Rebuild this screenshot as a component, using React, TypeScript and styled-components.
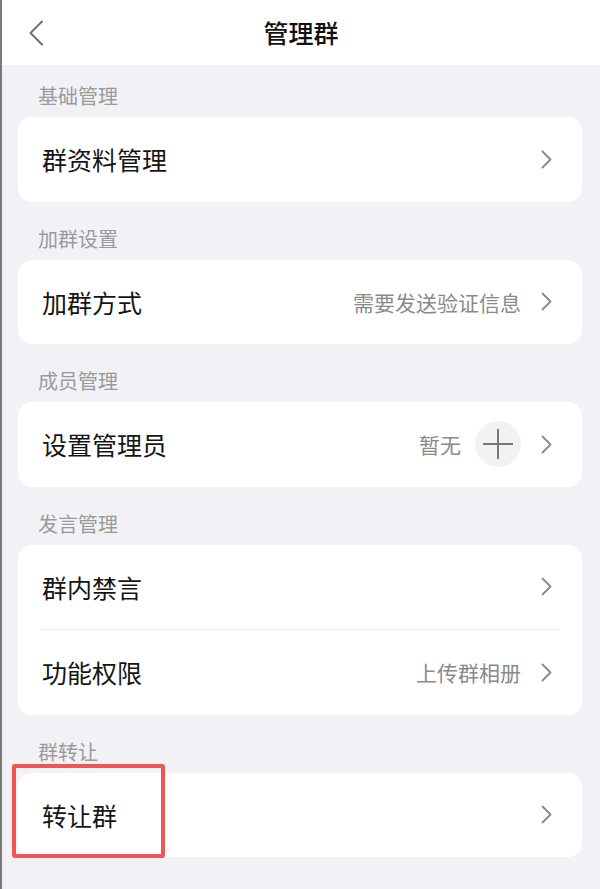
import React from "react";
import styled, { createGlobalStyle } from "styled-components";

const Global = createGlobalStyle`
  html, body { margin: 0; padding: 0; }
  body {
    font-family: "Noto Sans CJK SC", "Noto Sans", sans-serif;
    background: #f2f2f6;
  }
`;

const Page = styled.div`
  min-height: 889px;
  background: #f2f2f6;
  border-left: 2px solid #7a7a7a;
  box-sizing: border-box;
  display: flex;
  flex-direction: column;
`;

const Header = styled.header`
  height: 65px;
  background: #ffffff;
  display: grid;
  grid-template-columns: 58px 1fr 58px;
  align-items: center;
`;

const BackButton = styled.div`
  display: flex;
  align-items: center;
  padding-left: 26px;
  height: 100%;
`;

const Title = styled.h1`
  margin: 0;
  text-align: center;
  font-size: 25px;
  font-weight: 500;
  color: #111;
  line-height: 65px;
`;

const Content = styled.main`
  padding: 0 18px 0 16px;
  display: flex;
  flex-direction: column;
`;

const Label = styled.div<{ $first?: boolean }>`
  font-size: 20px;
  line-height: 28px;
  color: #9a9a9a;
  padding-left: 20px;
  margin: ${(p) => (p.$first ? "17px" : "23px")} 0 7px;
`;

const Card = styled.section`
  background: #ffffff;
  border-radius: 14px;
  display: flex;
  flex-direction: column;
`;

const Divider = styled.div`
  height: 1px;
  background: #ececec;
  margin: 0 24px;
`;

const Row = styled.div`
  position: relative;
  height: 84.5px;
  display: flex;
  align-items: center;
  padding: 0 30px 0 24px;
`;

const RowTitle = styled.span`
  flex: 1;
  font-size: 25px;
  color: #151515;
`;

const Value = styled.span`
  font-size: 21px;
  color: #8a8a8a;
  margin-right: 20px;
`;

const AddCircle = styled.div`
  width: 46px;
  height: 46px;
  border-radius: 50%;
  background: #f2f2f4;
  display: flex;
  align-items: center;
  justify-content: center;
  margin-left: -6px;
  margin-right: 20px;
`;

const Highlight = styled.div`
  position: absolute;
  left: -6px;
  top: -9px;
  width: 153px;
  height: 94px;
  border: 4px solid #f05656;
  border-radius: 3px;
  box-sizing: border-box;
  pointer-events: none;
`;

const Chevron = () => (
  <svg width="11" height="19" viewBox="0 0 11 19" fill="none">
    <path d="M1.5 1.5 L9.5 9.5 L1.5 17.5" stroke="#8a8a8a" strokeWidth="1.8" strokeLinecap="round" strokeLinejoin="round" />
  </svg>
);

const BackIcon = () => (
  <svg width="16" height="26" viewBox="0 0 16 26" fill="none">
    <path d="M14 1.5 L2.5 13 L14 24.5" stroke="#6e6e6e" strokeWidth="2" strokeLinecap="round" strokeLinejoin="round" />
  </svg>
);

const PlusIcon = () => (
  <svg width="30" height="30" viewBox="0 0 30 30" fill="none">
    <path d="M15 0 V30 M0 15 H30" stroke="#777" strokeWidth="2" />
  </svg>
);

export default function App() {
  return (
    <>
      <Global />
      <Page>
        <Header>
          <BackButton>
            <BackIcon />
          </BackButton>
          <Title>管理群</Title>
          <div />
        </Header>
        <Content>
          <Label $first>基础管理</Label>
          <Card>
            <Row>
              <RowTitle>群资料管理</RowTitle>
              <Chevron />
            </Row>
          </Card>

          <Label>加群设置</Label>
          <Card>
            <Row>
              <RowTitle>加群方式</RowTitle>
              <Value>需要发送验证信息</Value>
              <Chevron />
            </Row>
          </Card>

          <Label>成员管理</Label>
          <Card>
            <Row>
              <RowTitle>设置管理员</RowTitle>
              <Value>暂无</Value>
              <AddCircle>
                <PlusIcon />
              </AddCircle>
              <Chevron />
            </Row>
          </Card>

          <Label>发言管理</Label>
          <Card>
            <Row>
              <RowTitle>群内禁言</RowTitle>
              <Chevron />
            </Row>
            <Divider />
            <Row>
              <RowTitle>功能权限</RowTitle>
              <Value>上传群相册</Value>
              <Chevron />
            </Row>
          </Card>

          <Label>群转让</Label>
          <Card>
            <Row>
              <RowTitle>转让群</RowTitle>
              <Chevron />
              <Highlight />
            </Row>
          </Card>
        </Content>
      </Page>
    </>
  );
}
